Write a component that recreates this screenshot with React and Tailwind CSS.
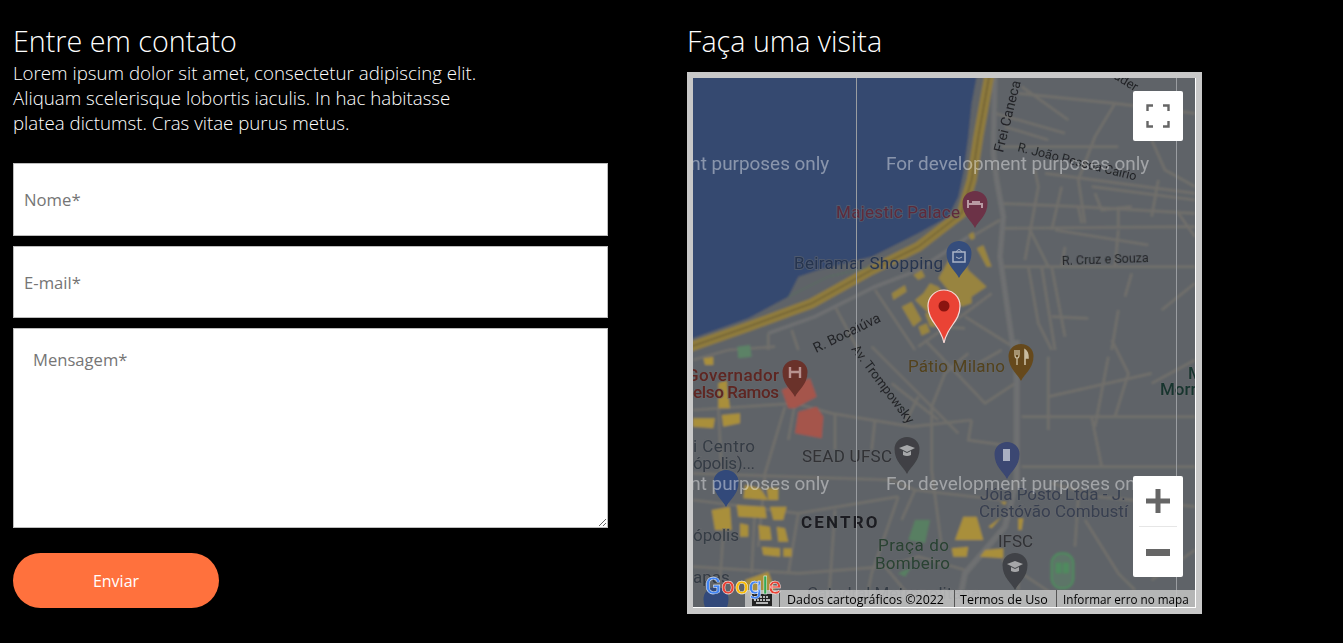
import React from 'react';

// traçado das ruas, em pixels dos recortes ampliados (3x): parte de cima e parte de baixo do mapa
const STREETS_TOP = [
  'M1010 50L1150 150', 'M930 130L1140 190', 'M960 170L1090 210', 'M950 230L1300 230', 'M1000 70L1290 100L1530 130', 'M1080 310L1530 370', 'M1220 350L1530 390',
  'M1290 100L1230 200L1180 330L1200 460', 'M1400 210L1440 300L1530 350', 'M940 400L1180 410L1530 430', 'M960 475L1530 470', 'M860 500L945 450',
  'M950 590L1530 590', 'M1050 300L1060 350L1020 570', 'M1100 480L1130 350', 'M1110 480L1390 525', 'M1140 530L1130 590', 'M1300 480L1290 590',
  'M1030 590L1060 760L1100 840', 'M1070 590L1110 840', 'M1100 590L1140 800', 'M1300 720L1280 840', 'M1430 720L1530 640', 'M1230 370L1250 420L1340 410',
  'M1480 430L1530 500', 'M1340 610L1320 680', 'M1100 740L1210 745', 'M1420 330L1400 440',
  'M450 710L520 840', 'M570 660L690 840', 'M250 790L250 840', 'M320 780L340 840', 'M700 830L840 730L920 670', 'M840 740L1000 840', 'M760 770L840 775',
  'M1180 410L1190 460', 'M1300 410L1300 470', 'M1030 470L1090 590',
];
const STREETS_BOTTOM = [
  'M1090 50L1090 270', 'M1270 50L1230 260', 'M1220 230L1250 380', 'M1090 170L1400 100', 'M1010 230L1530 230', 'M1010 380L1530 380', 'M1530 60L1400 130',
  'M720 0L900 190L990 130', 'M850 40L780 100L740 200L740 390L770 620', 'M620 130L760 240', 'M700 170L660 250', 'M880 70L950 30', 'M560 20L820 280',
  'M24 210L330 190L440 220L680 260L860 240', 'M300 200L240 400L220 620', 'M100 200L110 400', 'M330 190L310 300', 'M860 240L850 300L990 320',
  'M24 400L620 420L690 450L950 480', 'M24 680L340 700L600 680L700 650L840 690', 'M24 480L340 520L640 470', 'M640 470L560 700L540 800', 'M690 450L650 540',
  'M340 520L310 700', 'M450 510L430 800', 'M120 500L100 800', 'M210 500L200 700', 'M24 60L130 30L270 20', 'M1530 500L1240 470L1100 430',
  'M1200 540L1300 700L1350 750', 'M1180 470L1170 620', 'M1000 700L1000 750', 'M450 220L450 330', 'M570 240L560 330', 'M1280 0L1330 100L1290 230',
  'M600 680L700 800', 'M1420 480L1480 650', 'M1530 630L1400 720', 'M950 660L1100 760',
];

const BLOCKS_TOP = [
  'M620 670L660 645L665 665L625 690Z', 'M650 710L680 695L710 750L685 770Z', 'M700 770L725 760L735 785L710 797Z',
  'M760 625L820 520L850 600L905 650L860 680L860 700L830 710Z', 'M690 690L715 670L735 640L760 650L790 690L730 730Z',
  'M685 615L710 600L720 620L700 630Z', 'M875 535L895 525L920 590L905 590Z', 'M850 495L865 485L870 505L858 510Z', 'M720 730L745 730L755 770L735 770Z',
];
const BLOCKS_BOTTOM = [
  'M80 510L135 500L140 570L90 570Z', 'M155 495L240 500L245 535L160 530Z', 'M255 500L305 500L295 540L265 540Z', 'M165 550L190 555L190 590L165 590Z',
  'M220 555L255 560L260 600L225 600Z', 'M275 560L300 565L310 605L280 605Z', 'M230 620L285 625L285 650L235 645Z', 'M295 625L320 625L320 650L295 650Z',
  'M110 225L165 220L165 250L115 260Z', 'M55 55L85 50L85 75L60 75Z', 'M24 235L90 235L85 265L24 260Z', 'M100 130L125 120L135 205L100 205Z',
  'M810 600L835 530L875 530L895 600Z', 'M800 625L850 620L845 650L805 650Z', 'M885 650L900 630L955 625L955 655Z', 'M910 560L950 530L920 565Z',
  'M1000 535L1015 535L1010 570L1000 570Z', 'M945 485L965 485L960 495Z', 'M180 720L250 695L270 750L190 770Z', 'M180 435L225 445L250 480L175 475Z', 'M245 445L280 445L280 480L250 480Z',
];

const Pin = ({ x, y, color, children }) => (
  <g transform={`translate(${x} ${y})`}>
    <path d="M0 19C-3 12-12.5 7-12.5 -6C-12.5 -13-7-18 0-18C7-18 12.5 -13 12.5 -6C12.5 7 3 12 0 19Z" fill={color} />
    {children}
  </g>
);

const Cap = () => (
  <>
    <path d="M-8 -7L0 -10L8 -7L0 -3Z" fill="#a6a7a9" />
    <path d="M-4 -4V0Q0 2 4 0V-4L0 -2Z" fill="#a6a7a9" />
  </>
);

const Label = ({ x, y, color, children, ...rest }) => (
  <text x={x} y={y} fill={color} stroke="#66686c" strokeOpacity="0.5" strokeWidth="2" paintOrder="stroke" {...rest}>{children}</text>
);

const MapDrawing = () => (
  <svg viewBox="693 78 503 530" className="block w-[503px] h-[530px]">
    <defs>
      <filter id="soft"><feGaussianBlur stdDeviation="0.8" /></filter>
      <filter id="softer"><feGaussianBlur stdDeviation="0.3" /></filter>
    </defs>
    <g filter="url(#soft)">
      <rect x="670" y="55" width="550" height="575" fill="#5f6368" />
      <g transform="translate(685 70) scale(0.33333)">
        <path d="M-60 -60H890L860 100L850 200L835 310L820 380L790 440L700 490L620 530L560 560L400 600L340 620L310 680L190 745L-60 835Z" fill="#364a70" />
        <g fill="none" stroke="#716f6c" strokeWidth="8">
          {STREETS_TOP.map((d) => <path key={d} d={d} />)}
        </g>
        <path d="M930 0L925 250L935 330L955 440L945 560L985 840" fill="none" stroke="#6e6f71" strokeWidth="16" />
        <path d="M850 500L700 600L570 650L390 740L250 790" fill="none" stroke="#6e6f71" strokeWidth="11" />
        <g fill="#98843f">{BLOCKS_TOP.map((d) => <path key={d} d={d} />)}</g>
        <path d="M916 0L880 200L860 330L830 430L700 530L560 600L380 700L190 770L-40 850" fill="none" stroke="#8f7b3c" strokeWidth="30" />
        <path d="M916 0L880 200L860 330L830 430L700 530L560 600L380 700L190 770L-40 850" fill="none" stroke="#5a4e30" strokeWidth="3" />
        <path d="M310 680L430 620L560 590" fill="none" stroke="#56705f" strokeWidth="3" />
      </g>
      <g transform="translate(685 340) scale(0.33333)">
        <g fill="none" stroke="#716f6c" strokeWidth="8">
          {STREETS_BOTTOM.map((d) => <path key={d} d={d} />)}
        </g>
        <path d="M995 0L995 320L995 420L960 560L840 700L820 800" fill="none" stroke="#6e6f71" strokeWidth="18" />
        <g fill="#a98f3a">{BLOCKS_BOTTOM.map((d) => <path key={d} d={d} />)}</g>
        <path d="M157 20L195 15L200 50L160 55Z" fill="#5c8266" />
        <path d="M670 600L690 540L735 540L720 610Z" fill="#587f62" />
        <path d="M640 700L680 680L660 710Z" fill="#587f62" />
        <path d="M290 150L375 115L395 170L330 205L310 205Z" fill="#a5554b" />
        <path d="M340 215L395 200L415 230L410 295L330 280Z" fill="#a5554b" />
        <rect x="1100" y="640" width="65" height="105" rx="30" fill="#5d7467" stroke="#4f8a5e" strokeWidth="6" />
        <path d="M1112 668H1130V700H1112ZM1134 668H1152V700H1134Z" fill="#4f8a5e" />
      </g>
    </g>
    <g filter="url(#softer)">
      <Pin x={975} y={209} color="#6c3346"><path d="M-7 -1V-9M-7 -5H7V-1M-3 -7H5" stroke="#b89aa3" strokeWidth="2" fill="none" /></Pin>
      <Pin x={959} y={259} color="#354d7c"><path d="M-6 -7H6V3H-6Z" fill="none" stroke="#aab4c6" strokeWidth="1.5" /><path d="M-3 -2Q0 1 3 -2M-3 -7Q0 -12 3 -7" fill="none" stroke="#aab4c6" /></Pin>
      <Pin x={1021} y={362} color="#664a1c">
        <path d="M-6 -12V-7Q-6 -4 -4 -4V3M-4 -12V-7M-2 -12V-7Q-2 -4 -4 -4" stroke="#c9bca0" strokeWidth="1.3" fill="none" />
        <path d="M4 3V-12Q7 -10 7 -4H4" stroke="#c9bca0" strokeWidth="1.6" fill="#c9bca0" />
      </Pin>
      <Pin x={795} y={378} color="#6b302b"><path d="M-5 -11V0M5 -11V0M-5 -6H5" stroke="#b8938f" strokeWidth="2.4" fill="none" /></Pin>
      <Pin x={907} y={455} color="#3f4144"><Cap /></Pin>
      <Pin x={1007} y={460} color="#3a4672"><path d="M-4 -11H3V1H-4Z" fill="#a9afc2" /></Pin>
      <Pin x={726} y={488} color="#30497a" />
      <Pin x={1015} y={571} color="#404246"><Cap /></Pin>
      <Pin x={716} y={605} color="#30497a" />
    </g>

    <g fontFamily="Roboto, sans-serif" fontSize="17" filter="url(#softer)">
      <Label x="836" y="218" color="#5f2a3b" textLength="124">Majestic Palace</Label>
      <Label x="794" y="269" color="#25344f" textLength="149">Beiramar Shopping</Label>
      <Label x="908" y="372" color="#53421c" textLength="97">Pátio Milano</Label>
      <Label x="687" y="381" color="#5e2521" fontWeight="500" textLength="92">Governador</Label>
      <Label x="693" y="398" color="#5e2521" fontWeight="500" textLength="86">elso Ramos</Label>
      <Label x="693" y="452" color="#353c45" textLength="62">i Centro</Label>
      <Label x="693" y="469" color="#353c45" textLength="62">ópolis)...</Label>
      <Label x="802" y="462" color="#303236" textLength="90">SEAD UFSC</Label>
      <Label x="980" y="500" color="#383f50">Jóia Posto Ltda - J.</Label>
      <Label x="979" y="517" color="#383f50">Cristóvão Combustí</Label>
      <Label x="693" y="541" color="#353c45">ópolis</Label>
      <Label x="878" y="551" color="#294232" textLength="71">Praça do</Label>
      <Label x="875" y="569" color="#294232" textLength="75">Bombeiro</Label>
      <Label x="998" y="547" color="#303236">IFSC</Label>
      <Label x="693" y="583" color="#353c45">apas</Label>
      <Label x="807" y="599" color="#353c45">Catedral Metropolitana</Label>
      <Label x="1188" y="379" color="#19342f" fontWeight="500">M</Label>
      <Label x="1160" y="395" color="#19342f" fontWeight="500">Morr</Label>
      <Label x="801" y="528" color="#1a1d20" fontWeight="700" letterSpacing="2.2">CENTRO</Label>
    </g>
    <g fontFamily="Roboto, sans-serif" fontSize="14" fill="#222427" filter="url(#softer)">
      <text transform="translate(816 353) rotate(-26)">R. Bocaiúva</text>
      <text transform="translate(851 349) rotate(53)" fontSize="13">Av. Trompowsky</text>
      <text transform="translate(1003 153) rotate(-76)">Frei Caneca</text>
      <text transform="translate(1017 151) rotate(14)" fontSize="12.5">R. João Pessoa Caírio</text>
      <text transform="translate(1062 265) rotate(-2)" fontSize="12.5">R. Cruz e Souza</text>
      <text transform="translate(1113 78) rotate(32)" fontSize="13">ader</text>
    </g>
    <g fontFamily="Roboto, sans-serif" fontSize="18.9" fill="#ffffff" fillOpacity="0.42" filter="url(#softer)">
      <text x="886" y="170">For development purposes only</text>
      <text x="566" y="170">For development purposes only</text>
      <text x="886" y="490">For development purposes only</text>
      <text x="566" y="490">For development purposes only</text>
    </g>
    <path d="M856.5 78V608M1176.5 78V608" stroke="#9a9da1" strokeWidth="1" />
    <path d="M1195.5 78V608M693 607.5H1196" stroke="#ffffff" strokeWidth="1" />

    {/* marcador */}
    <path d="M944 343C941 326 928 322 928 306C928 297 935 290 944 290C953 290 960 297 960 306C960 322 947 326 944 343Z" fill="#ea4335" stroke="#f4d9d5" strokeWidth="1.2" />
    <circle cx="944" cy="306" r="5.5" fill="#8a1410" />
  </svg>
);

const Field = ({ placeholder, className }) => (
  <input
    placeholder={placeholder}
    className={`w-full h-[73px] bg-white border border-[#bdbdbd] px-[10px] text-[16.7px] placeholder:text-[#757575] outline-none ${className}`}
  />
);

export default function App() {
  return (
    <div className="min-h-[643px] bg-black text-white pl-[13px] flex gap-[79px] font-['Open_Sans',sans-serif]">
      <div className="w-[595px] pt-[22px]">
        <h2 className="text-[28.7px] leading-[38px] font-light">Entre em contato</h2>
        <p className="text-[18.7px] leading-[25px] font-light w-[480px]">
          Lorem ipsum dolor sit amet, consectetur adipiscing elit. Aliquam scelerisque lobortis iaculis. In hac habitasse platea dictumst. Cras vitae purus metus.
        </p>
        <form className="mt-[28px] flex flex-col">
          <Field placeholder="Nome*" />
          <Field placeholder="E-mail*" className="mt-[10px] !h-[72px]" />
          <textarea
            placeholder="Mensagem*"
            className="mt-[10px] block w-full h-[200px] bg-white border border-[#bdbdbd] px-[19px] pt-[19px] text-[16.6px] leading-[23px] placeholder:text-[#757575] outline-none"
          />
          <button type="button" className="mt-[25px] w-[206px] h-[55px] rounded-[28px] bg-[#ff713d] text-white text-[16px] text-center">
            Enviar
          </button>
        </form>
      </div>

      <div className="w-[515px] pt-[22px]">
        <h2 className="text-[28.7px] leading-[38px] font-light">Faça uma visita</h2>
        <div className="relative mt-[12px] w-[515px] h-[542px] border-[6px] border-[#c8c8c8] overflow-hidden">
          <MapDrawing />

          <div className="absolute top-[13px] left-[440px] w-[50px] h-[50px] bg-white rounded-[2px] flex items-center justify-center">
            <svg width="24" height="24" viewBox="0 0 24 24" fill="none" stroke="#666666" strokeWidth="2.4">
              <path d="M1.5 7V1.5H7M17 1.5H22.5V7M1.5 17V22.5H7M17 22.5H22.5V17" />
            </svg>
          </div>

          <div className="absolute top-[398px] left-[440px] w-[50px] h-[101px] bg-white rounded-[2px] flex flex-col items-center">
            <div className="h-[50px] flex items-center justify-center">
              <svg width="24" height="24" viewBox="0 0 24 24" fill="#666666"><path d="M9.5 0H14.5V9.5H24V14.5H14.5V24H9.5V14.5H0V9.5H9.5Z" /></svg>
            </div>
            <div className="w-[38px] h-px bg-[#e6e6e6]" />
            <div className="h-[50px] flex items-center justify-center">
              <svg width="24" height="7" viewBox="0 0 24 7" fill="#666666"><rect width="24" height="7" /></svg>
            </div>
          </div>

          <div className="absolute left-[52px] top-[512px] w-[450px] h-[17px] bg-[#c4c4c4]/85 flex items-center text-[12px] leading-[19px] text-black">
            <div className="w-[35px] h-full flex items-center justify-center border-r border-[#555555]">
              <svg width="20" height="12" viewBox="0 0 20 12" fill="#222222" className="mt-[2px]">
                <path d="M0 0H20V12H0ZM2 2V4H4V2ZM5 2V4H7V2ZM8 2V4H10V2ZM11 2V4H13V2ZM14 2V4H16V2ZM2 5V7H4V5ZM5 5V7H7V5ZM8 5V7H10V5ZM11 5V7H13V5ZM14 5V7H18V5ZM4 8V10H16V8Z" fillRule="evenodd" />
              </svg>
            </div>
            <span className="w-[175px] pl-[7px] h-full border-r border-[#555555] whitespace-nowrap text-[12.4px]">Dados cartográficos ©2022</span>
            <span className="w-[102px] pl-[5px] h-full border-r border-[#555555] whitespace-nowrap text-[12.5px]">Termos de Uso</span>
            <span className="pl-[6px] h-full whitespace-nowrap text-[11.7px]">Informar erro no mapa</span>
          </div>

          <div className="absolute left-[12px] top-[494px] font-['Roboto',sans-serif] font-medium text-[24px] leading-[28px] tracking-[0px] [-webkit-text-stroke:0.4px_#ffffff]">
            <span className="text-[#4285f4]">G</span>
            <span className="text-[#ea4335]">o</span>
            <span className="text-[#fbbc05]">o</span>
            <span className="text-[#4285f4]">g</span>
            <span className="text-[#34a853]">l</span>
            <span className="text-[#ea4335]">e</span>
          </div>
        </div>
      </div>
    </div>
  );
}
